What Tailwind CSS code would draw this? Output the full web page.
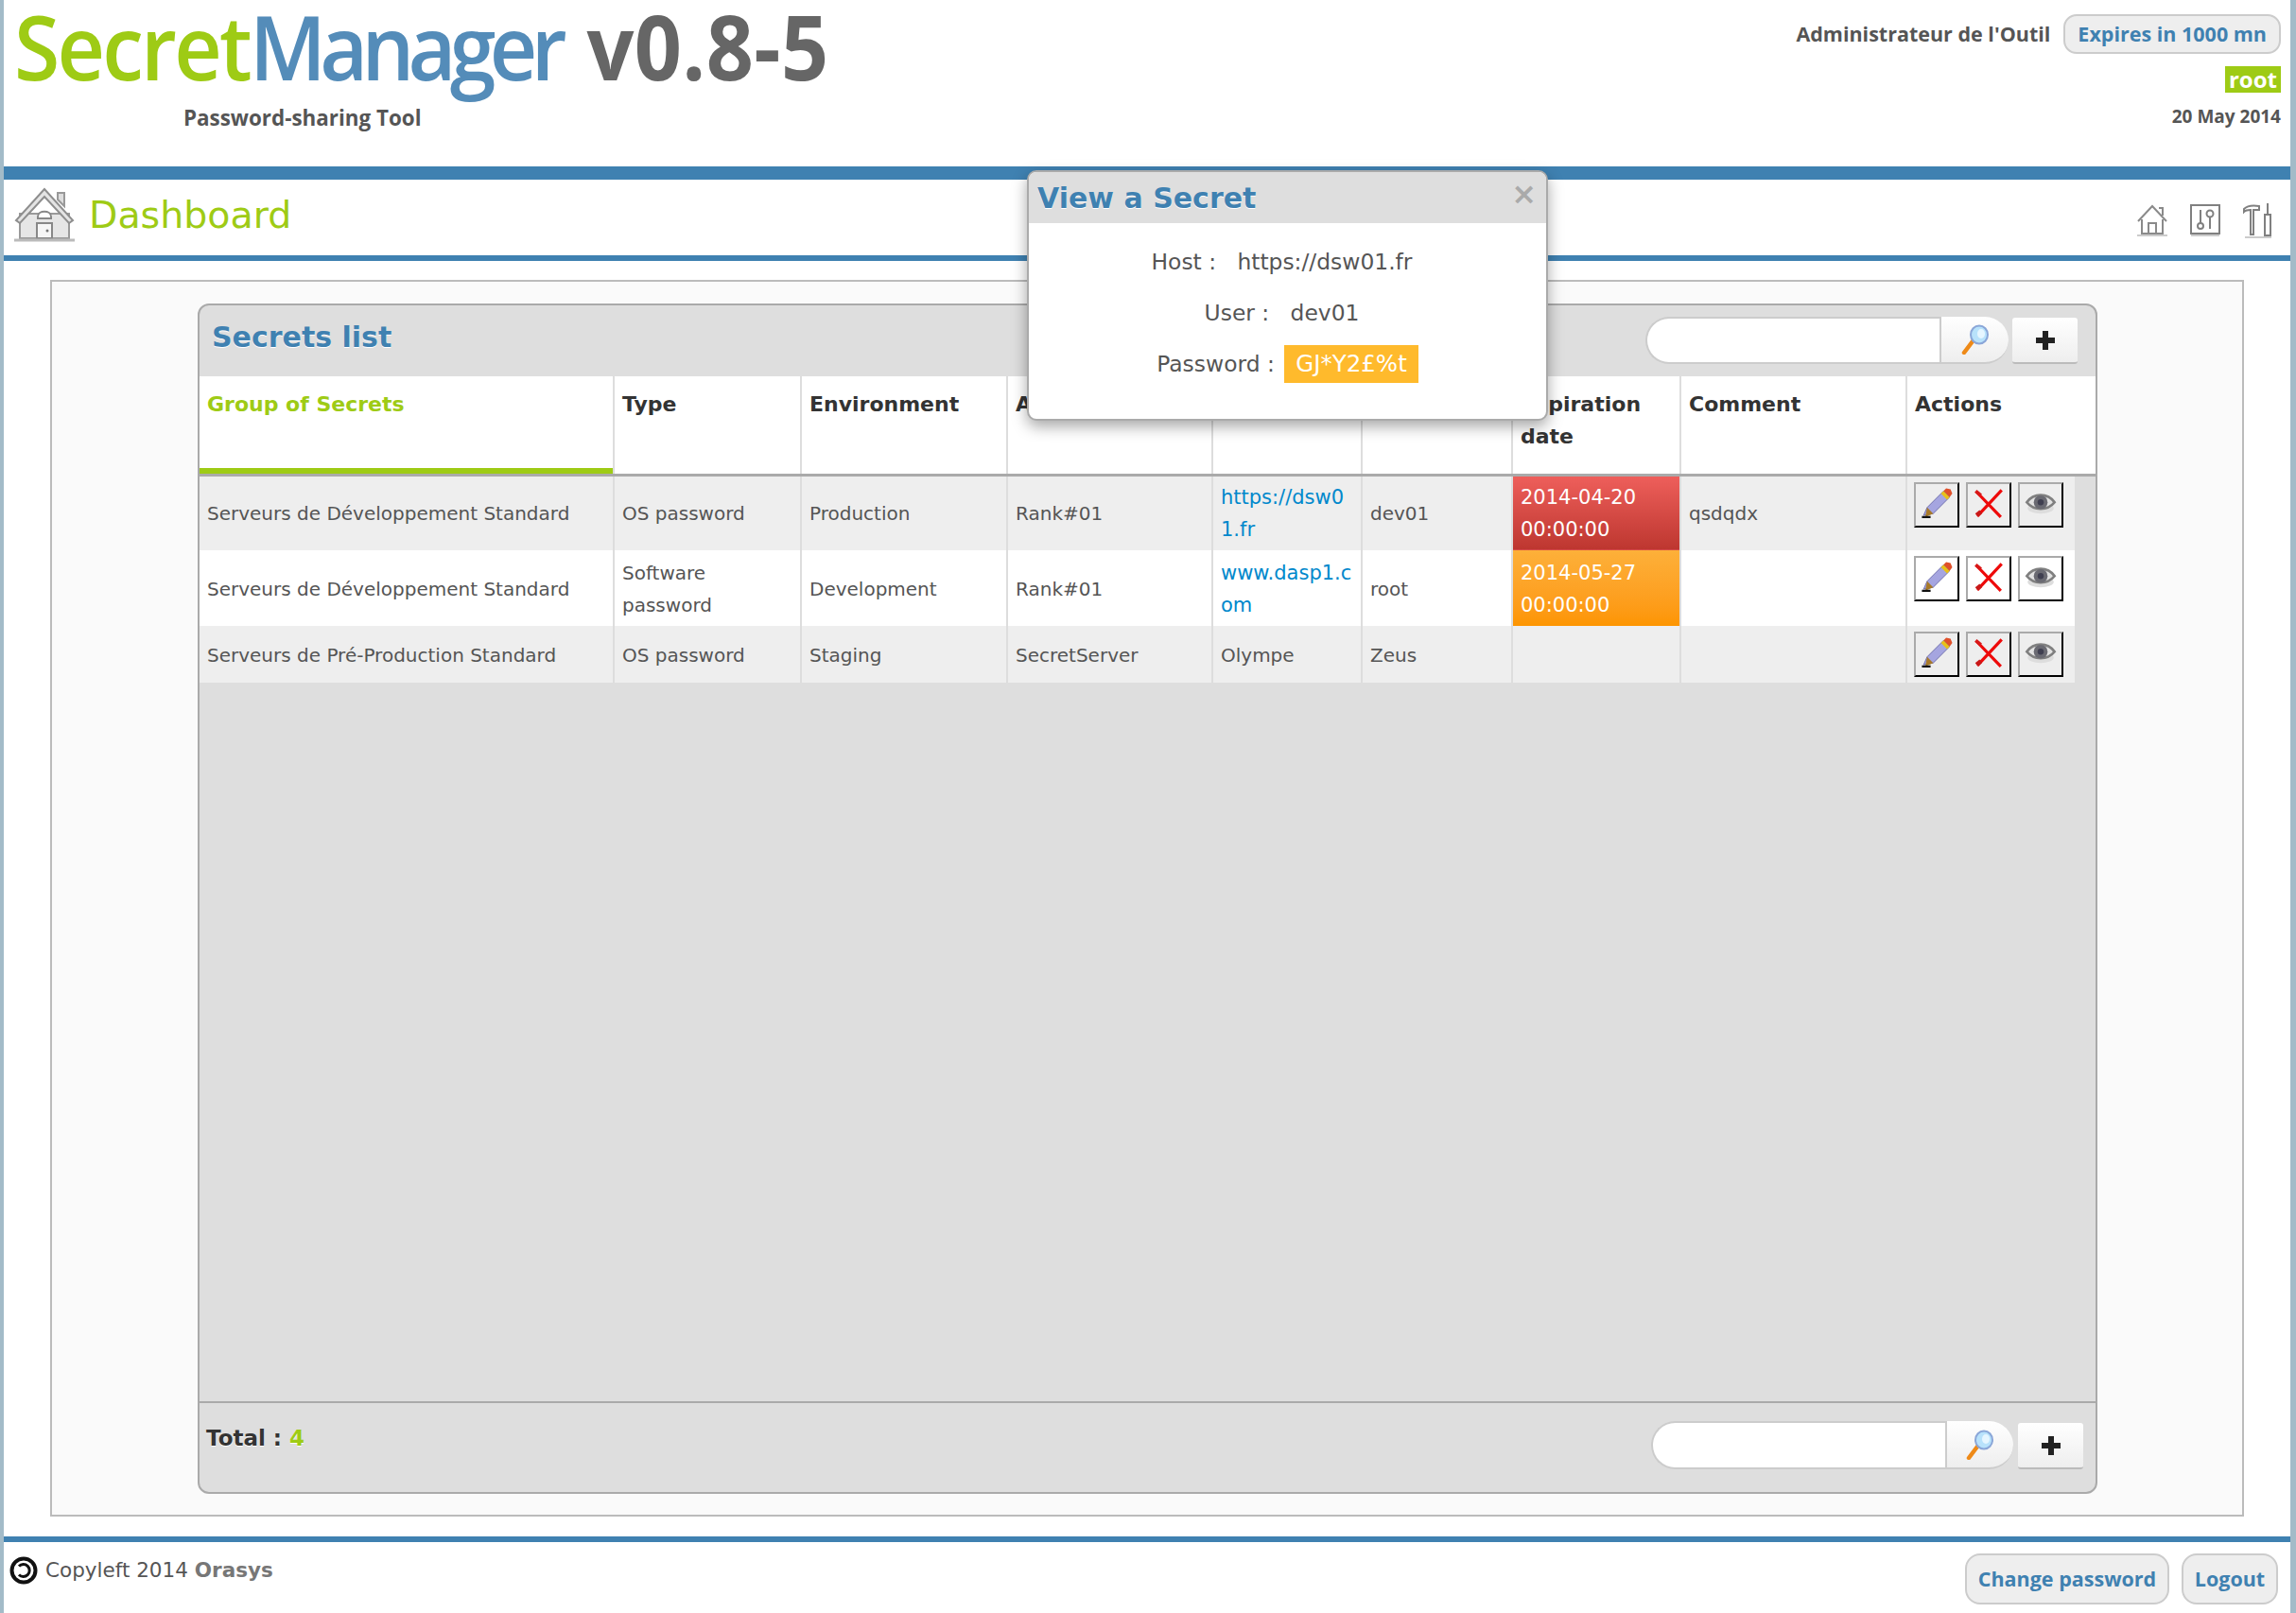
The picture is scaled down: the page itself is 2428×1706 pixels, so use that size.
<!DOCTYPE html>
<html lang="en">
  <head>
    <meta charset="UTF-8" />
    <title>SecretManager</title>
    <script src="https://cdn.jsdelivr.net/npm/@tailwindcss/browser@4"></script>
  </head>
  <body class="bg-white">
    <!-- shared icons -->
    <svg class="absolute w-0 h-0">
      <symbol id="pencil" viewBox="0 0 48 48">
        <path d="M9 36l4-9 19-19 7 7-19 19z" fill="#a5a5e0" stroke="#6a6aa8" stroke-width="1"/>
        <path d="M13 27l7 7-9 4z" fill="#a87a28"/>
        <path d="M29 11l7 7 3-3-7-7z" fill="#e8c018"/>
        <path d="M32 8l3-3 5 1 2 5-3 4z" fill="#e0502a"/>
        <path d="M7 38h10" stroke="#111" stroke-width="2.5"/>
      </symbol>
      <symbol id="cross" viewBox="0 0 48 48">
        <path d="M10 9l28 29M39 7L11 37" stroke="#ee0a0a" stroke-width="3.5" fill="none"/>
        <path d="M10 36l5-4" stroke="#c81818" stroke-width="5"/>
        <path d="M9 8l6 5" stroke="#d81818" stroke-width="4"/>
      </symbol>
      <symbol id="eye" viewBox="0 0 48 48">
        <ellipse cx="24" cy="28" rx="15" ry="6" fill="#ddd"/>
        <path d="M8 21c8-11 24-11 32 0-8 10-24 10-32 0z" fill="#e2e2e2" stroke="#808080" stroke-width="3"/>
        <circle cx="24" cy="21" r="8" fill="#6a6a72"/>
        <circle cx="24" cy="21" r="3.5" fill="#3f3f50"/>
      </symbol>
      <symbol id="loupe" viewBox="0 0 32 32">
        <path d="M4 30l9-12" stroke="#ee8a18" stroke-width="4.5" stroke-linecap="round"/>
        <ellipse cx="20" cy="11" rx="9" ry="9.5" fill="#b8e2fb" stroke="#8aa6d8" stroke-width="2"/>
        <ellipse cx="22" cy="10" rx="4" ry="5" fill="#e6f6ff"/>
      </symbol>
    </svg>

    <div class="relative h-[1706px] flex flex-col border-l-4 border-r-[6px] border-[#a3bbc8] font-['DejaVu_Sans',sans-serif] text-[#555] text-[20px] leading-[34px]">
      <!-- top banner -->
      <header class="h-[176px] flex justify-between pl-[11px] pr-[10px]">
        <div>
          <div class="origin-left scale-x-[.924] whitespace-nowrap font-['Open_Sans',sans-serif] font-semibold text-[95px] leading-[96px] tracking-[-3px] text-[#666]">
            <span class="text-[#9ecb15]">Secret</span><span class="text-[#548cb9] tracking-[-7.2px]">Manager</span> <span class="ml-[8px] font-bold tracking-[0.4px]">v0.8-5</span>
          </div>
          <p class="ml-[179px] mt-[14px] font-['Open_Sans',sans-serif] font-bold text-[22.4px] leading-[30px]">Password-sharing Tool</p>
        </div>
        <div class="flex flex-col items-end font-bold">
          <div class="flex items-center gap-[14px] mt-[15px]">
            <span class="font-['Open_Sans',sans-serif] text-[21.5px]">Administrateur de l'Outil</span>
            <span class="h-[42px] px-[13px] flex items-center rounded-[14px] border-2 border-[#ccc] bg-[#eee] text-[#3f81b1] font-['Open_Sans',sans-serif] text-[21.5px]">Expires in 1000 mn</span>
          </div>
          <span class="mt-[13px] h-[28px] w-[59px] flex items-center justify-center bg-[#9ecb15] text-white font-['Open_Sans',sans-serif] text-[24px]">root</span>
          <span class="mt-[9px] font-['Open_Sans',sans-serif] text-[19px] leading-[32px]">20 May 2014</span>
        </div>
      </header>

      <!-- page title -->
      <div class="h-[100px] flex justify-between items-center border-t-[14px] border-b-[6px] border-[#3f81b1] pl-[11px] pr-[18px]">
        <div class="flex items-center gap-[15px] -mt-[7px]">
          <svg class="w-[64px] h-[62px]" viewBox="0 0 64 62">
            <path d="M6 56V30h52v26z" fill="#e6e6e6" stroke="#9a9a9a" stroke-width="2"/>
            <path d="M32 4L2 37l4 3L32 12l26 28 4-3z" fill="#e4e4e4" stroke="#8e8e8e" stroke-width="2"/>
            <path d="M46 8h7v14l-7-7z" fill="#ddd" stroke="#999" stroke-width="2"/>
            <path d="M25 33c0-7 14-7 14 0v2H25z" fill="#fff" stroke="#888" stroke-width="2"/>
            <path d="M24 40h16v16H24z" fill="#f6f6f6" stroke="#888" stroke-width="2"/>
            <circle cx="35" cy="48" r="1.5" fill="#777"/>
            <path d="M0 58h64" stroke="#bbb" stroke-width="3"/>
          </svg>
          <h1 class="text-[#9ecb15] text-[39.5px] leading-[50px] font-normal">Dashboard</h1>
        </div>
        <div class="flex items-center gap-[24px] mt-[5px]">
          <svg class="w-[32px] h-[34px]" viewBox="0 0 32 34" fill="none" stroke="#8a8a8a" stroke-width="2">
            <path d="M1 18L16 2l15 16M23 4h4v8"/><path d="M5 16v15h22V16"/><path d="M12 31V20h8v11"/><path d="M0 33h32" stroke="#ccc"/>
          </svg>
          <svg class="w-[32px] h-[34px]" viewBox="0 0 32 34" fill="none" stroke="#808080" stroke-width="2">
            <rect x="1" y="1" width="30" height="30"/><path d="M11 6v14M21 14v12"/><circle cx="11" cy="23" r="3"/><circle cx="21" cy="10" r="3.5"/><path d="M1 33h30" stroke="#ccc"/>
          </svg>
          <svg class="w-[32px] h-[38px]" viewBox="0 0 32 38" fill="none" stroke="#808080" stroke-width="2">
            <path d="M1 7c4-4 10-4 16-3v4H11v26H8V8C6 8 3 8 1 10z"/><path d="M26 1v12M23 13h6v22h-6z"/><path d="M2 37h28" stroke="#ccc"/>
          </svg>
        </div>
      </div>

      <!-- content -->
      <main class="flex-1 pl-[49px] pr-[49px] pt-[20px] pb-[21px] flex">
        <div class="flex-1 flex border-2 border-[#bbb] bg-[#fafafa] pl-[154px] pr-[153px] pt-[23px] pb-[22px]">
          <section class="flex-1 flex flex-col border-2 border-[#aaa] rounded-[12px] bg-[#dedede]">
            <div class="h-[75px] shrink-0 flex justify-between items-start pl-[13px] pr-[19px]">
              <h2 class="mt-[15px] text-[#3f81b1] font-bold text-[30px] leading-[38px] [text-shadow:0_1px_0_#fff]">Secrets list</h2>
              <div class="flex items-start mt-[12px] gap-[4px]">
                <div class="flex">
                  <div class="w-[311px] h-[50px] bg-white rounded-l-full border-2 border-r-0 border-[#ccc]"></div>
                  <div class="w-[73px] h-[50px] flex items-center justify-center rounded-r-full border-l-2 border-b-2 border-[#ccc] bg-gradient-to-b from-white to-[#eee]">
                    <svg class="w-[32px] h-[32px]"><use href="#loupe"/></svg>
                  </div>
                </div>
                <div class="w-[69px] h-[49px] mt-px flex items-center justify-center rounded-[3px] border-b-2 border-[#bbb] bg-gradient-to-b from-white to-[#eee]">
                  <svg class="w-[24px] h-[24px]" viewBox="0 0 24 24"><path d="M12 2v20M2 12h20" stroke="#222" stroke-width="6"/></svg>
                </div>
              </div>
            </div>

            <div class="flex-1">
              <table class="w-full table-fixed">
                <colgroup>
                  <col class="w-[438px]"/><col class="w-[198px]"/><col class="w-[218px]"/><col class="w-[217px]"/><col class="w-[158px]"/><col class="w-[159px]"/><col class="w-[178px]"/><col class="w-[239px]"/><col class="w-[178px]"/><col class="w-[22px]"/>
                </colgroup>
                <thead>
                  <tr class="h-[104px] bg-white text-left text-[#333] text-[22px] [&>th]:align-top [&>th]:font-bold [&>th]:pt-[13px] [&>th]:px-[8px] [&>th]:border-r-2 [&>th]:border-b-[3px] [&>th]:border-r-[#ddd] [&>th]:border-b-[#aaa]">
                    <th class="text-[#9ecb15] shadow-[inset_0_-6px_0_#9ecb15]">Group of Secrets</th>
                    <th>Type</th>
                    <th>Environment</th>
                    <th>Application</th>
                    <th>Host</th>
                    <th>User</th>
                    <th>Expiration date</th>
                    <th>Comment</th>
                    <th colspan="2" class="!border-r-0">Actions</th>
                  </tr>
                </thead>
                <tbody>
                  <tr class="h-[80px] [&>td]:bg-[#eee] [&>td]:px-[8px] [&>td]:pt-[1px] [&>td]:border-r-2 [&>td]:border-r-[#ddd]">
                    <td>Serveurs de Développement Standard</td>
                    <td>OS password</td>
                    <td>Production</td>
                    <td>Rank#01</td>
                    <td class="break-all text-[#0088cc] text-[21px]">https://dsw01.fr</td>
                    <td>dev01</td>
                    <td class="!bg-transparent bg-gradient-to-b from-[#ee5f5b] to-[#bd362f] text-white text-[21px]">2014-04-20 00:00:00</td>
                    <td>qsdqdx</td>
                    <td class="align-top !pt-[6px] !border-r-0">
                      <div class="flex gap-[7px] -ml-[1px]">
                        <span class="w-[48px] h-[48px] border-2 border-t-[#aaa] border-l-[#aaa] border-r-black border-b-black"><svg class="w-full h-full"><use href="#pencil"/></svg></span>
                        <span class="w-[48px] h-[48px] border-2 border-t-[#aaa] border-l-[#aaa] border-r-black border-b-black"><svg class="w-full h-full"><use href="#cross"/></svg></span>
                        <span class="w-[48px] h-[48px] border-2 border-t-[#aaa] border-l-[#aaa] border-r-black border-b-black"><svg class="w-full h-full"><use href="#eye"/></svg></span>
                      </div>
                    </td>
                  </tr>
                  <tr class="h-[80px] [&>td]:bg-white [&>td]:px-[8px] [&>td]:pt-[1px] [&>td]:border-r-2 [&>td]:border-r-[#ddd]">
                    <td>Serveurs de Développement Standard</td>
                    <td>Software password</td>
                    <td>Development</td>
                    <td>Rank#01</td>
                    <td class="break-all text-[#0088cc] text-[21px]">www.dasp1.com</td>
                    <td>root</td>
                    <td class="!bg-transparent bg-gradient-to-b from-[#fdb039] to-[#fd9500] text-white text-[21px]">2014-05-27 00:00:00</td>
                    <td></td>
                    <td class="align-top !pt-[6px] !border-r-0">
                      <div class="flex gap-[7px] -ml-[1px]">
                        <span class="w-[48px] h-[48px] border-2 border-t-[#aaa] border-l-[#aaa] border-r-black border-b-black"><svg class="w-full h-full"><use href="#pencil"/></svg></span>
                        <span class="w-[48px] h-[48px] border-2 border-t-[#aaa] border-l-[#aaa] border-r-black border-b-black"><svg class="w-full h-full"><use href="#cross"/></svg></span>
                        <span class="w-[48px] h-[48px] border-2 border-t-[#aaa] border-l-[#aaa] border-r-black border-b-black"><svg class="w-full h-full"><use href="#eye"/></svg></span>
                      </div>
                    </td>
                  </tr>
                  <tr class="h-[60px] [&>td]:bg-[#eee] [&>td]:px-[8px] [&>td]:pt-[1px] [&>td]:border-r-2 [&>td]:border-r-[#ddd]">
                    <td>Serveurs de Pré-Production Standard</td>
                    <td>OS password</td>
                    <td>Staging</td>
                    <td>SecretServer</td>
                    <td>Olympe</td>
                    <td>Zeus</td>
                    <td></td>
                    <td></td>
                    <td class="align-top !pt-[6px] !border-r-0">
                      <div class="flex gap-[7px] -ml-[1px]">
                        <span class="w-[48px] h-[48px] border-2 border-t-[#aaa] border-l-[#aaa] border-r-black border-b-black"><svg class="w-full h-full"><use href="#pencil"/></svg></span>
                        <span class="w-[48px] h-[48px] border-2 border-t-[#aaa] border-l-[#aaa] border-r-black border-b-black"><svg class="w-full h-full"><use href="#cross"/></svg></span>
                        <span class="w-[48px] h-[48px] border-2 border-t-[#aaa] border-l-[#aaa] border-r-black border-b-black"><svg class="w-full h-full"><use href="#eye"/></svg></span>
                      </div>
                    </td>
                  </tr>
                </tbody>
              </table>
            </div>

            <div class="h-[96px] shrink-0 flex justify-between items-start border-t-2 border-[#aaa] pl-[7px] pr-[13px]">
              <p class="mt-[20px] font-bold text-[23px] text-[#333] [text-shadow:0_1px_0_#fff]">Total : <span class="text-[#9ecb15]">4</span></p>
              <div class="flex items-start mt-[19px] gap-[5px]">
                <div class="flex">
                  <div class="w-[311px] h-[51px] bg-white rounded-l-full border-2 border-r-0 border-[#ccc]"></div>
                  <div class="w-[72px] h-[51px] flex items-center justify-center rounded-r-full border-l-2 border-b-2 border-[#ccc] bg-gradient-to-b from-white to-[#eee]">
                    <svg class="w-[32px] h-[32px]"><use href="#loupe"/></svg>
                  </div>
                </div>
                <div class="w-[69px] h-[49px] mt-[2px] flex items-center justify-center rounded-[3px] border-b-2 border-[#bbb] bg-gradient-to-b from-white to-[#eee]">
                  <svg class="w-[24px] h-[24px]" viewBox="0 0 24 24"><path d="M12 2v20M2 12h20" stroke="#222" stroke-width="6"/></svg>
                </div>
              </div>
            </div>
          </section>
        </div>
      </main>

      <!-- footer -->
      <footer class="h-[81px] shrink-0 flex justify-between items-start border-t-[6px] border-[#3f81b1] pl-[6px] pr-[13px]">
        <div class="flex items-center gap-[8px] mt-[13px] text-[21.5px]">
          <svg class="w-[30px] h-[30px]" viewBox="0 0 30 30" fill="none" stroke="#111">
            <circle cx="15" cy="15" r="12.5" stroke-width="4"/>
            <path d="M10 10.5a6.5 6.5 0 1 1 0 9" stroke-width="3"/>
          </svg>
          <span>Copyleft 2014 <b class="text-[#777]">Orasys</b></span>
        </div>
        <div class="flex gap-[13px] mt-[12px] font-['Open_Sans',sans-serif] font-bold text-[21.5px] text-[#3f81b1]">
          <a class="h-[54px] w-[216px] flex items-center justify-center rounded-[16px] border-2 border-[#ccc] bg-[#eee]">Change password</a>
          <a class="h-[54px] w-[102px] flex items-center justify-center rounded-[16px] border-2 border-[#ccc] bg-[#eee]">Logout</a>
        </div>
      </footer>

      <!-- modal sits over the dashboard -->
      <div class="absolute left-[1082px] top-[180px] w-[551px] h-[265px] bg-white border-2 border-[#aaa] rounded-[10px] shadow-[0_6px_16px_rgba(0,0,0,0.35)] overflow-hidden">
        <div class="h-[54px] flex justify-between items-start bg-[#dedede] pl-[9px] pr-[10px]">
          <h3 class="mt-[9px] text-[#3f81b1] font-bold text-[30px] leading-[38px] [text-shadow:0_1px_0_#fff]">View a Secret</h3>
          <span class="mt-[6px] text-[#aaa] font-bold text-[32px] leading-[34px]">×</span>
        </div>
        <div class="pt-[24px] text-center text-[23.4px] leading-[34px] flex flex-col gap-[20px]">
          <p class="pr-[12px]">Host :&nbsp;&nbsp; https://dsw01.fr</p>
          <p class="pr-[12px]">User :&nbsp;&nbsp; dev01</p>
          <p>Password : <span class="inline-block h-[40px] -my-[3px] ml-[3px] leading-[40px] px-[12px] text-[24.5px] bg-[#ffba2c] text-white">GJ*Y2£%t</span></p>
        </div>
      </div>
    </div>
  </body>
</html>
